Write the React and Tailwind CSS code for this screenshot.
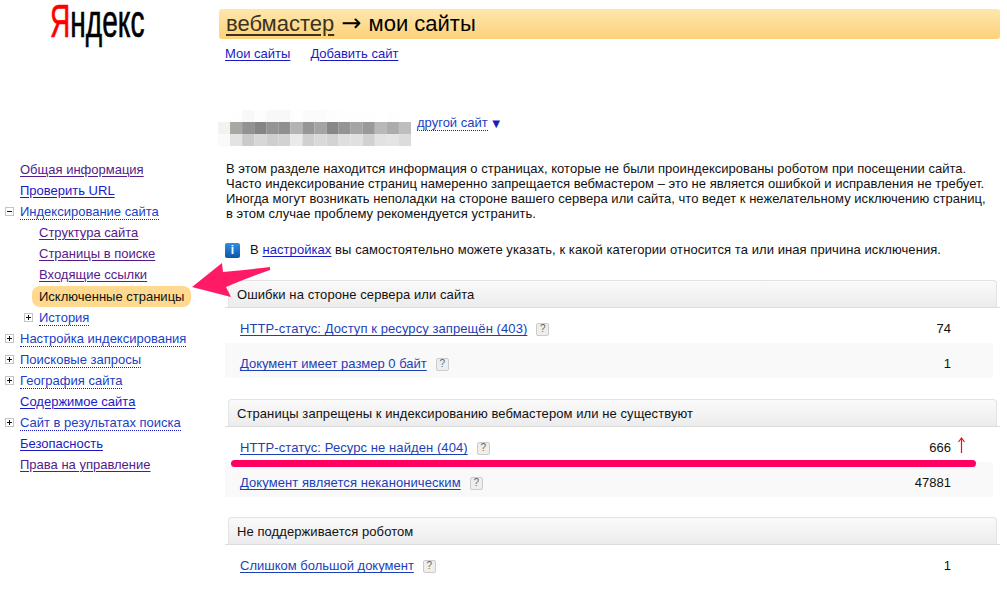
const font = { fontFamily: '"Liberation Sans", Arial, sans-serif' };

const Row1 = ["#ffffff","#fefefe","#f8f8f8","#fdfdfd","#f8f8f8","#f8f8f8","#fefefe","#fbfbfb","#fbfbfb","#fdfdfd","#fefefe","#fefefe","#fefefe","#ffffff","#fefefe","#ffffff"];
const Row2 = ["#f3f2f1","#a8a7a4","#929290","#858583","#949494","#8f8f8d","#b4b2b2","#979696","#a4a4a2","#888786","#959394","#a5a5a3","#989a98","#b8b8b8","#acacaa","#bebebe"];
const Row3 = ["#fafafa","#e4e3e3","#cbcaca","#d6d7d6","#cfcfcf","#d2d2d2","#eaeae9","#d0d0cf","#d8d9d8","#d2d4d3","#dfdfdf","#e0e0e0","#d1d1d1","#e2e2e2","#e4e4e4","#dcdcdc"];

function Mosaic() {
  return (
    <svg width="193" height="36" className="block shrink-0">
      {[Row1, Row2, Row3].map((r, y) =>
        r.map((c, x) => <rect key={x + "-" + y} x={x * 12.06} y={y * 12} width="12.1" height="12" fill={c} />)
      )}
    </svg>
  );
}

function Toggle({ open }) {
  return (
    <svg width="9" height="9" className="absolute left-[-15px] top-[6px]">
      <rect x="0.5" y="0.5" width="8" height="8" fill="#fff" stroke="#888" strokeDasharray="1 1" />
      <path d={open ? "M2 4.5h5" : "M2 4.5h5M4.5 2v5"} stroke="#111" />
    </svg>
  );
}

const link = "text-[#1a1ac4] underline underline-offset-2";
const visited = "text-[#551a8b] underline underline-offset-2";
const dotted = "text-[#1a3fc4] border-b border-dotted border-[#1a1ac4] leading-[14px] inline-block";

function NavItem({ children, kind = "link", toggle, sub }) {
  return (
    <div className={"h-[21px] leading-[21px] relative " + (sub ? "ml-[39px]" : "ml-[20px]")}>
      {toggle && <Toggle open={toggle === "open"} />}
      {kind === "dotted" ? <span className={dotted}>{children}</span> : <a className={kind === "visited" ? visited : link}>{children}</a>}
    </div>
  );
}

function Help() {
  return (
    <span className="inline-flex w-[13px] h-[13px] ml-[9px] items-center justify-center rounded-[2px] border border-[#cccccc] bg-[#eeeeee] text-[10px] leading-none text-[#666]">?</span>
  );
}

function Group({ title, rows, mt }) {
  return (
    <section className={mt}>
      <div className="border-b border-[#dcdcdc] px-[3px]">
        <div className="h-[27px] leading-[27px] pl-[8px] rounded-t-[4px] border-t border-l border-r border-[#e3e3e3] bg-gradient-to-b from-[#fafafa] to-[#ececec] text-[#111] tracking-[0.08px]">{title}</div>
      </div>
      {rows.map((r, i) => (
        <div key={i} className={"h-[35px] pt-[7px] flex items-center pl-[15px] w-[768px] " + (i % 2 ? "bg-[#f9f9f9]" : "")}>
          <a className={link + " text-[#1c3fb5] " + (r[2] ? "tracking-[0.08px]" : "")}>{r[0]}</a>
          <Help />
          <span className="ml-auto shrink-0 text-right text-[#111] mr-[42px]">{r[1]}</span>
        </div>
      ))}
    </section>
  );
}

export default function App() {
  return (
    <div style={font} className="relative w-[1007px] h-[591px] overflow-hidden bg-white text-[13px] text-[#111] flex">
      <aside className="w-[219px] shrink-0">
        <div className="h-[40px] mt-[1px] pl-[50px] text-[34px] leading-[40px] whitespace-nowrap">
          <span className="inline-block origin-left scale-x-[0.826] scale-y-[1.35] [-webkit-text-stroke:0.5px]"><span className="text-[#ff0000]">Я</span><span className="text-black">ндекс</span></span>
        </div>
        <nav className="mt-[118px]">
          <NavItem kind="visited">Общая информация</NavItem>
          <NavItem>Проверить URL</NavItem>
          <NavItem kind="dotted" toggle="open">Индексирование сайта</NavItem>
          <NavItem kind="visited" sub>Структура сайта</NavItem>
          <NavItem kind="visited" sub>Страницы в поиске</NavItem>
          <NavItem kind="visited" sub>Входящие ссылки</NavItem>
          <div className="h-[21px] ml-[32px] mt-[1px] pl-[7px] w-[159px] leading-[21px] rounded-[8px] bg-[#fed98f] text-[#111]">Исключенные страницы</div>
          <NavItem kind="dotted" toggle="closed" sub>История</NavItem>
          <NavItem kind="dotted" toggle="closed">Настройка индексирования</NavItem>
          <NavItem kind="dotted" toggle="closed">Поисковые запросы</NavItem>
          <NavItem kind="dotted" toggle="closed">География сайта</NavItem>
          <NavItem>Содержимое сайта</NavItem>
          <NavItem kind="dotted" toggle="closed">Сайт в результатах поиска</NavItem>
          <NavItem>Безопасность</NavItem>
          <NavItem kind="visited">Права на управление</NavItem>
        </nav>
      </aside>

      <main className="w-[781px] pt-[9px]">
        <div className="h-[30px] leading-[30px] pl-[7px] rounded-[3px] bg-gradient-to-b from-[#fee7ac] to-[#fdd17a] text-[22px] text-black whitespace-nowrap">
          <a className="underline underline-offset-[3px] text-[#3b3320]">вебмастер</a> <span className="ml-[1px] mr-[1px] text-[24px] leading-[24px]" style={{ fontFamily: '"DejaVu Sans", sans-serif' }}>→</span> мои сайты
        </div>
        <div className="mt-[6px] pl-[6px] flex gap-[20px] leading-[18px]">
          <a className={link}>Мои сайты</a>
          <a className={link}>Добавить сайт</a>
        </div>
        <div className="mt-[47px] -ml-[1px] flex items-start">
          <Mosaic />
          <div className="ml-[6px] mt-[6px] flex items-center gap-[2px]">
            <span className={dotted + " text-[#1a1ac4]"}>другой сайт</span>
            <span className="text-[#1a1ac4] text-[13px] leading-[14px]">▼</span>
          </div>
        </div>
        <p className="mt-[15px] ml-[7px] leading-[15px] w-[770px] text-[#111] tracking-[0.02px]">
          В этом разделе находится информация о страницах, которые не были проиндексированы роботом при посещении сайта.<br />
          Часто индексирование страниц намеренно запрещается вебмастером – это не является ошибкой и исправления не требует.<br />
          Иногда могут возникать неполадки на стороне вашего сервера или сайта, что ведет к нежелательному исключению страниц,<br />
          в этом случае проблему рекомендуется устранить.
        </p>
        <div className="mt-[20px] ml-[6px] flex items-center h-[18px]">
          <span className="w-[15px] h-[15px] rounded-[2px] bg-gradient-to-b from-[#2f8fe0] to-[#0a58a8] text-white text-[12px] font-bold leading-[15px] text-center">i</span>
          <span className="ml-[10px] tracking-[0.07px]">В <a className={link}>настройках</a> вы самостоятельно можете указать, к какой категории относится та или иная причина исключения.</span>
        </div>
        <div className="ml-[6px]">
          <Group mt="mt-[21px]" title="Ошибки на стороне сервера или сайта" rows={[["HTTP-статус: Доступ к ресурсу запрещён (403)", "74", 1], ["Документ имеет размер 0 байт", "1"]]} />
          <Group mt="mt-[21px]" title="Страницы запрещены к индексированию вебмастером или не существуют" rows={[["HTTP-статус: Ресурс не найден (404)", "666", 1], ["Документ является неканоническим", "47881", 1]]} />
          <Group mt="mt-[20px]" title="Не поддерживается роботом" rows={[["Слишком большой документ", "1"]]} />
        </div>
      </main>

      {/* annotations over content */}
      <div className="absolute left-[231px] top-[460px] w-[745px] h-[7px] rounded-full bg-[#ff0060]" />
      <svg className="absolute left-[955px] top-[435px]" width="14" height="20" viewBox="0 0 14 20">
        <path d="M6.5 3v15M3.5 7l3-4 3 4" fill="none" stroke="#f01010" strokeWidth="1.2" />
      </svg>
      <svg className="absolute left-[185px] top-[255px]" width="90" height="50" viewBox="0 0 90 50">
        <path d="M7 32 L37 8 L38 17 Q60 15 85 12 L85 15 Q62 23 41 32 L46 42 Z" fill="#ff1a66" />
      </svg>
    </div>
  );
}
